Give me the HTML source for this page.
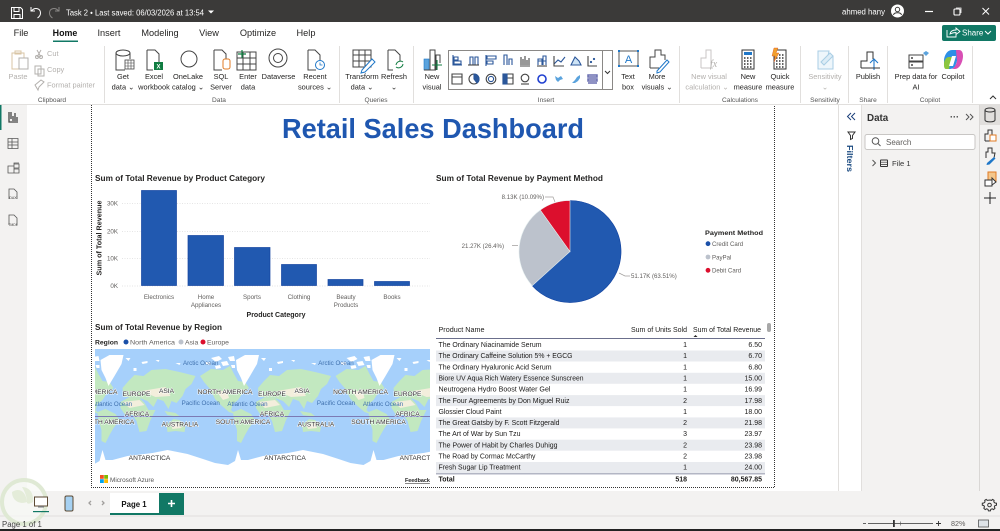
<!DOCTYPE html>
<html><head><meta charset="utf-8"><title>Retail Sales Dashboard</title>
<style>
html,body{margin:0;padding:0;background:#fff;overflow:hidden}
svg{display:block;position:absolute;left:0;top:0}
text{font-family:"Liberation Sans",sans-serif;font-size:7.5px;fill:#3b3a39}
.m{text-anchor:middle}.e{text-anchor:end}
.r{font-size:7.4px;fill:#252423}
.d{fill:#b3b0ad}
.g{font-size:6.6px;fill:#555}
.tab{font-size:9.2px;fill:#252423}
.h{font-size:8.6px;font-weight:bold;fill:#252423}
.ax{font-size:6.2px;fill:#605e5c}
.lb{font-size:6.1px;fill:#605e5c}
.t{font-size:7px;fill:#1b1a19}
.ml{font-size:6.6px;fill:#333;paint-order:stroke;stroke:#fff;stroke-width:1px;text-anchor:middle}
.oc{font-size:6.2px;fill:#3f70ad;text-anchor:middle}
.i{fill:none;stroke:#444;stroke-width:1}
.s{fill:none;stroke:#2b579a;stroke-width:1.1}
</style></head><body>
<svg width="1000" height="531" viewBox="0 0 1000 531" xmlns="http://www.w3.org/2000/svg">
<defs>
<clipPath id="mc"><rect x="95" y="349" width="335" height="125"/></clipPath>
<g id="tile">
<path fill="#c2e8c0" d="M-3,376L8,369L20,370L27,366L31,374L35,381L42,382L46,388L39,394L35,400L30,404L28,410L32,414L26,412L19,406L12,399L7,389L1,382Z"/>
<path fill="#c2e8c0" d="M30,412L38,409L48,414L52,420L46,428L42,435L38,443L34,441L34,430L31,420Z"/>
<path fill="#fff" d="M33,360L42,355L56,355L54,364L47,376L41,386L38,378L34,370Z"/>
<path fill="#fff" d="M8,358l8,-2l3,3l-6,3zM18,362l6,-1l2,4l-6,1zM25,357l6,-1l1,5l-5,0zM58,358l5,0l-2,3zM2,362l5,0l1,3l-5,0zM12,366l5,-1l1,3l-5,1zM28,365l4,0l0,3l-3,0zM74,362l6,-1l0,2l-5,1zM88,360l4,0l-1,2zM108,363l5,0l-1,2zM66,368l3,0l0,3l-3,0z"/>
<path fill="#c2e8c0" d="M53,402L62,397L72,398L77,403L81,410L88,410L83,420L79,431L72,432L69,421L65,415L57,414L53,408Z"/>
<path fill="#c2e8c0" d="M56,397L55,388L61,381L67,375L76,376L84,370L98,369L112,372L128,376L124,384L118,389L115,396L109,403L104,401L101,409L96,401L90,399L86,407L80,401L72,398L62,397Z"/>
<path fill="#c2e8c0" d="M99,425L106,419L112,420L118,426L117,432L108,431L100,432Z"/>
<path fill="#c2e8c0" d="M97,411L108,413L113,417L100,415Z"/>
<path fill="#f3eedc" d="M55,402L72,400L77,405L62,408ZM74,391L98,387L103,396L88,397ZM103,424L113,423L114,428L105,429ZM14,392L24,390L26,398L20,400Z"/>
<path fill="#fff" d="M0,474L0,459L12,463L25,465L32,461L35,450L38,460L45,460L60,456L85,453L100,450L120,454L135.5,459L135.5,474Z"/>
</g>
</defs>

<!-- backgrounds -->
<rect width="1000" height="531" fill="#fff"/>
<rect x="0" y="105" width="27" height="411" fill="#f3f2f1"/>
<rect x="0" y="104" width="1000" height="1" fill="#e1dfdd"/>
<rect x="862" y="105" width="118" height="386" fill="#f3f2f1"/>
<rect x="838" y="105" width="1" height="386" fill="#e1dfdd"/>
<rect x="861" y="105" width="1" height="386" fill="#e1dfdd"/>
<rect x="980" y="105" width="20" height="411" fill="#f3f2f1"/>
<rect x="979" y="105" width="1" height="386" fill="#d9d7d5"/>
<rect x="27" y="491" width="973" height="25" fill="#f3f2f1"/>
<rect x="0" y="516" width="1000" height="13" fill="#f3f2f1"/>
<rect x="0" y="515.5" width="1000" height="1" fill="#e1dfdd"/>
<rect x="0" y="529" width="1000" height="2" fill="#222"/>

<!-- title bar -->
<rect width="1000" height="22" fill="#3b3a39"/>
<g fill="none" stroke="#fff" stroke-width="1">
<path d="M11.5,7.5h9l2,2v9h-11zM14,7.5v4h5v-4M14,18.5v-4h6v4"/>
<path d="M31,7v4h4M31.5,11c3,-4 9,-3 9,2c0,2.500 -1.500,4 -3,5"/>
<path stroke="#8a8886" d="M59,7v4h-4M58.500,11c-3,-4 -9,-3 -9,2c0,2.500 1.500,4 3,5"/>
</g>
<text x="66" y="15.500" style="font-size:7.800px;fill:#fff" textLength="138" lengthAdjust="spacingAndGlyphs">Task 2 • Last saved: 06/03/2026 at 13:54</text>
<path d="M208,10.500h6l-3,3z" fill="#fff"/>
<text x="842" y="14.500" style="font-size:7.800px;fill:#fff" textLength="43" lengthAdjust="spacingAndGlyphs">ahmed hany</text>
<circle cx="897.500" cy="11" r="6.500" fill="#fff"/>
<circle cx="897.500" cy="9.500" r="2.200" fill="none" stroke="#3b3a39"/>
<path d="M893.500,15c.5,-3 7.500,-3 8,0" fill="none" stroke="#3b3a39"/>
<path d="M925,11.500h8" stroke="#fff" stroke-width="1.200"/>
<rect x="954" y="9" width="6" height="6" rx="1" fill="none" stroke="#fff" stroke-width="1.100"/>
<path d="M956,8h5v5" fill="none" stroke="#fff" stroke-width=".8"/>
<path d="M982.500,8l6.500,6.500M989,8l-6.500,6.500" stroke="#fff" stroke-width="1"/>

<!-- tabs -->
<text class="tab m" x="21" y="36">File</text>
<text class="tab m" x="65" y="36" style="font-weight:bold;font-size:8.900px;fill:#111">Home</text>
<text class="tab m" x="109" y="36">Insert</text>
<text class="tab m" x="160" y="36">Modeling</text>
<text class="tab m" x="209" y="36">View</text>
<text class="tab m" x="258" y="36">Optimize</text>
<text class="tab m" x="306" y="36">Help</text>
<rect x="53" y="40.500" width="25" height="1.500" fill="#117865"/>
<rect x="942" y="25" width="54" height="16" rx="2" fill="#117865"/>
<path d="M947,30v7h9v-3M950,34c.5,-3 3,-4 6,-4v-2l4,3.500l-4,3v-2c-3,0 -4,.5 -6,1.500z" fill="none" stroke="#fff" stroke-width=".9"/>
<text x="962" y="35.500" style="font-size:8px;fill:#fff">Share</text>
<path d="M985,31l3,3l3,-3" fill="none" stroke="#fff"/>

<!-- ribbon separators -->
<g fill="#e1dfdd">
<rect x="104" y="46" width="1" height="57"/><rect x="339" y="46" width="1" height="57"/><rect x="413" y="46" width="1" height="57"/>
<rect x="679" y="46" width="1" height="57"/><rect x="800" y="46" width="1" height="57"/><rect x="848" y="46" width="1" height="57"/>
<rect x="887" y="46" width="1" height="57"/><rect x="972" y="46" width="1" height="57"/>
</g>

<!-- ribbon labels -->
<text class="r d m" x="18" y="79">Paste</text>
<text class="r d" x="47" y="56">Cut</text>
<text class="r d" x="47" y="72">Copy</text>
<text class="r d" x="47" y="87.500">Format painter</text>
<text class="r m" x="123" y="79">Get</text><text class="r m" x="123" y="89.500">data ⌄</text>
<text class="r m" x="154" y="79">Excel</text><text class="r m" x="154" y="89.500">workbook</text>
<text class="r m" x="188" y="79">OneLake</text><text class="r m" x="188" y="89.500">catalog ⌄</text>
<text class="r m" x="221" y="79">SQL</text><text class="r m" x="221" y="89.500">Server</text>
<text class="r m" x="248" y="79">Enter</text><text class="r m" x="248" y="89.500">data</text>
<text class="r m" x="278.500" y="79">Dataverse</text>
<text class="r m" x="315" y="79">Recent</text><text class="r m" x="315" y="89.500">sources ⌄</text>
<text class="r m" x="362" y="79">Transform</text><text class="r m" x="362" y="89.500">data ⌄</text>
<text class="r m" x="394" y="79">Refresh</text><text class="r m" x="394" y="89.500">⌄</text>
<text class="r m" x="432" y="79">New</text><text class="r m" x="432" y="89.500">visual</text>
<text class="r m" x="628" y="79">Text</text><text class="r m" x="628" y="89.500">box</text>
<text class="r m" x="657" y="79">More</text><text class="r m" x="657" y="89.500">visuals ⌄</text>
<text class="r d m" x="709" y="79">New visual</text><text class="r d m" x="707" y="89.500">calculation ⌄</text>
<text class="r m" x="748" y="79">New</text><text class="r m" x="748" y="89.500">measure</text>
<text class="r m" x="780" y="79">Quick</text><text class="r m" x="780" y="89.500">measure</text>
<text class="r d m" x="825" y="79">Sensitivity</text><text class="r d m" x="825" y="89.500">⌄</text>
<text class="r m" x="868" y="79">Publish</text>
<text class="r m" x="916" y="79">Prep data for</text><text class="r m" x="916" y="89.500">AI</text>
<text class="r m" x="953" y="79">Copilot</text>
<text class="g m" x="52" y="102">Clipboard</text><text class="g m" x="219" y="102">Data</text><text class="g m" x="376" y="102">Queries</text>
<text class="g m" x="546" y="102">Insert</text><text class="g m" x="740" y="102">Calculations</text><text class="g m" x="825" y="102">Sensitivity</text>
<text class="g m" x="868" y="102">Share</text><text class="g m" x="930" y="102">Copilot</text>
<path d="M990,99l3,-3l3,3" fill="none" stroke="#333"/>

<!-- ribbon icons: clipboard -->
<g fill="none" stroke="#d9c5a5"><path d="M12,53h12v16h-12z"/><path d="M15,51h6v3h-6z"/></g>
<rect x="19" y="58" width="9" height="11" fill="#fff" stroke="#b3b0ad"/>
<g fill="none" stroke="#b3b0ad"><path d="M37,50l4,7M41,50l-4,7"/><circle cx="37" cy="57" r="1.500"/><circle cx="41" cy="57" r="1.500"/>
<path d="M35,66h6v8h-6zM38,69h6v7h-6zM35,85l6,-5l3,2l-5,5l-1,3z"/></g>
<!-- data -->
<g class="i">
<path d="M116,53v17h9M130,53v6"/><ellipse cx="123" cy="53" rx="7" ry="3"/>
<path d="M147,50h8l4,4v9M147,50v20h6"/>
<path d="M214,50h8l4,4v6M214,50v20h8"/>
<path d="M308,50h7l5,5v8M308,50v20h8"/>
<path d="M237,52h19v18h-19zM237,58h19M237,64h19M243,52v18M250,52v18"/>
<circle cx="189" cy="59" r="8"/><circle cx="278" cy="58" r="9"/><circle cx="278" cy="58" r="4.500"/>
</g>
<path d="M181,59a8,8 0 0 1 8,-8a8,8 0 0 0 0,16a8,8 0 0 1 -8,-8z" fill="#333"/>
<rect x="125" y="60" width="9" height="9" fill="#fff" stroke="#444" stroke-width=".8"/><path d="M125,63h9M125,66h9M128,60v9M131,60v9" stroke="#444" stroke-width=".6"/>
<rect x="154" y="62" width="9" height="8" fill="#107c41"/><text x="156.500" y="68.500" style="font-size:6px;fill:#fff;font-weight:bold">X</text>
<rect x="223" y="59" width="7" height="10" rx="2" fill="#fff" stroke="#e07b24"/>
<path d="M242,50v8M238,54h8" stroke="#107c41" stroke-width="1.200"/>
<circle cx="320" cy="65" r="4.500" fill="#fff" stroke="#1f77c8"/><path d="M320,62.500v2.500h2.500" stroke="#1f77c8" fill="none" stroke-width=".8"/>
<!-- queries -->
<g class="i"><path d="M353,50h18v17h-18zM353,55h18M353,61h18M359,50v17M365,50v17"/><path d="M388,50h7l5,5v6M388,50v20h5"/></g>
<path d="M362,70l10,-11l3,3l-10,10l-4,1z" fill="#fff" stroke="#1f77c8"/>
<path d="M396,65a4.500,4.500 0 0 1 7,-3M403,64a4.500,4.500 0 0 1 -7,3" fill="none" stroke="#107c41"/>
<!-- new visual -->
<rect x="424" y="59" width="5" height="11" fill="#5ba3dd" stroke="#1f77c8" stroke-width=".6"/>
<path d="M430,70v-20h5v20M436,70v-15h4v8M424,70h12" fill="none" stroke="#444"/>
<path d="M437,60v10M432,65h10" stroke="#107c41" stroke-width="1.100"/>
<!-- gallery -->
<rect x="448.500" y="50.500" width="154" height="39" fill="none" stroke="#8a8886"/>
<rect x="602.500" y="50.500" width="10" height="39" fill="none" stroke="#8a8886"/>
<path d="M605,71l2.500,2.500l2.500,-2.500" fill="none" stroke="#333"/>
<g class="s">
<path d="M453,55v10h9M454,57h4v3h-4zM454,61h7v3h-7z"/>
<path d="M470,65v-8h3v8M475,65v-8h3v8"/><path d="M468,65h11" stroke="#444"/>
<path d="M487,56h9v3h-9zM487,61h6v3h-6zM486,55v11"/>
<path d="M504,65v-10h3v10M509,65v-6h3v6"/>
<path d="M521,65v-8M523,65v-6M525,65v-9M527,65v-5M529,65v-7M520,66h10" stroke="#444"/>
<path d="M538,65v-6h4v6M543,65v-9h3v9M538,61h8"/><path d="M537,66h10" stroke="#444"/>
<path d="M554,64l4,-4l3,2l4,-5" /><path d="M554,56v10h10" stroke="#444"/>
<path d="M571,65l4,-8l4,4l2,4z" fill="#cde3f5"/>
<path d="M588,56v10h9" stroke="#444"/><circle cx="591" cy="62" r=".6"/><circle cx="594" cy="59" r=".6"/>
<path d="M452,74h10v10h-10zM452,77h10" stroke="#444"/><circle cx="474" cy="79" r="5" stroke="#444"/><path d="M474,74a5,5 0 0 1 3,9l-3,-4z" fill="#2b579a"/>
<circle cx="491" cy="79" r="4.800" stroke="#444"/><circle cx="491" cy="79" r="2.600"/>
<path d="M503,74h10v10h-10zM507,74v10M507,78h6" stroke="#444"/><rect x="503" y="74" width="4" height="10" fill="#2b579a"/>
<circle cx="525" cy="78" r="3.800" stroke="#444"/><path d="M521,84h8" stroke="#444"/>
<circle cx="542" cy="79" r="4" stroke="#1f3fd0" stroke-width="1.600"/>
<path d="M555,76l3,2l3,-2l2,3l-3,1l-2,2l-2,-2z" fill="#5ba3dd" stroke="none"/>
<path d="M572,83l3,-3l2,-3l3,-2l0,3l-2,3l-3,2z" fill="#5ba3dd" stroke="none"/>
<path d="M588,75h9v2h-9zM588,79h9v2h-9zM588,83h9" stroke="#6a6fb0" stroke-width="1.500"/>
</g>
<!-- text box, more visuals -->
<rect x="619" y="51" width="19" height="15" fill="none" stroke="#555"/>
<g fill="#1f77c8"><rect x="618" y="50" width="2" height="2"/><rect x="637" y="50" width="2" height="2"/><rect x="618" y="65" width="2" height="2"/><rect x="637" y="65" width="2" height="2"/></g>
<text class="m" x="628.500" y="63" style="font-size:11px;fill:#1f77c8">A</text>
<path d="M650,68v-11h5v-7h6v5h4v5M650,68h9" fill="none" stroke="#444"/>
<path d="M657,71l10,-11l2,2l-9,10l-3,1z" fill="#fff" stroke="#1f77c8"/>
<!-- calculations -->
<g fill="none" stroke="#c8c6c4"><path d="M701,68v-10h5v-8h5v18M701,68h12"/></g>
<text x="710" y="67" style="font-size:10px;font-style:italic;fill:#b3b0ad;font-family:'Liberation Serif',serif">fx</text>
<rect x="742" y="50" width="12" height="19" fill="#fff" stroke="#333"/><rect x="744" y="52" width="8" height="3" fill="#1f77c8"/>
<path d="M744,58h8M744,61h8M744,64h8M744,67h8" stroke="#333" stroke-dasharray="1.500 1.500" stroke-width="1.500"/>
<rect x="774" y="50" width="12" height="19" fill="#fff" stroke="#333"/>
<path d="M776,55h8M776,58h8M776,61h8M776,64h8M776,67h8" stroke="#333" stroke-dasharray="1.500 1.500" stroke-width="1.500"/>
<path d="M774,48h4l-2,5h3l-5,9l1,-6h-3z" fill="#f2a12e" stroke="#d9541e" stroke-width=".4"/>
<!-- sensitivity -->
<path d="M818,51h11l-1,5l5,0v13h-15z" fill="#eef6fb" stroke="#a9cde4"/><path d="M821,62l9,-9l3,3l-9,9z" fill="#dcecf6" stroke="#a9cde4"/>
<!-- publish -->
<path d="M861,68v-7h6v-9h6v7M861,68h8" fill="none" stroke="#333"/>
<path d="M874,70v-11M870,63l4,-4l4,4" fill="none" stroke="#1f77c8" stroke-width="1.100"/><path d="M868,68h12" stroke="#333"/>
<!-- prep data -->
<rect x="909" y="55" width="14" height="6" fill="none" stroke="#444"/><rect x="909" y="62" width="14" height="6" fill="none" stroke="#444"/>
<path d="M923,53l3,-2l3,2l-3,3z" fill="#5ba3dd"/><circle cx="912" cy="58" r="1" fill="#444"/><circle cx="912" cy="65" r="1" fill="#444"/>
<!-- copilot -->
<path d="M944,61c0,-5 3,-11 8,-11h5c3,0 3,3 2,5l-3,9c-1,4 -4,5 -7,5h-2c-3,0 -3,-4 -3,-8z" fill="#2d8fe6"/>
<path d="M944,64c0,-5 3,-7 5,-7l3,0l-3,12h-3c-2,0 -2,-3 -2,-5z" fill="#8cc63f"/>
<path d="M956,50h3c3,0 4,3 4,6c0,5 -3,13 -8,13h-4c3,0 5,-4 6,-8z" fill="#d84fb4"/>
<path d="M949,66l3,-10h4l-3,10z" fill="#fff"/>

<!-- left nav -->
<rect x="0" y="105" width="1.500" height="25" fill="#117865"/>
<path d="M9,112v10h9M11,119v-7M13,121v-5M15,121v-8M17,121v-4" fill="none" stroke="#444" stroke-width="1.300"/>
<path d="M8,138.500h10v10h-10zM8,142h10M8,145h10M12,138.500v10" fill="none" stroke="#555" stroke-width=".8"/>
<path d="M8,166h6v7h-6zM14,164h5v4h-5zM14,169h5v4h-5zM14,164v-1h5" fill="none" stroke="#555" stroke-width=".8"/>
<path d="M9,199v-10h5l3,3v7" fill="none" stroke="#555" stroke-width=".8"/><text class="m" x="13" y="199" style="font-size:3.500px">DAX</text>
<path d="M9,225v-10h5l3,3v7" fill="none" stroke="#555" stroke-width=".8"/><text class="m" x="13" y="226" style="font-size:3.500px">TMDL</text>

<!-- report canvas dashed border -->
<path d="M91.500,105v382.500h683v-382.500" fill="none" stroke="#333" stroke-dasharray="1 1" stroke-width="1"/>
<text class="m" x="433" y="138" style="font-size:28px;font-weight:bold;fill:#1f57b0" textLength="302" lengthAdjust="spacingAndGlyphs">Retail Sales Dashboard</text>

<!-- bar chart -->
<text class="h" x="95" y="181" textLength="170" lengthAdjust="spacingAndGlyphs">Sum of Total Revenue by Product Category</text>
<g stroke="#ddd" stroke-dasharray="1 1.500" stroke-width=".8"><path d="M122,203.500h308M122,231.500h308M122,258.500h308M122,286h308"/></g>
<g fill="#2159b0" stroke="#1343a0" stroke-width=".7">
<rect x="141.500" y="190.500" width="35" height="95"/><rect x="188" y="235.500" width="35.500" height="50"/>
<rect x="234.500" y="247.500" width="35.500" height="38"/><rect x="281.500" y="264.500" width="35" height="21"/>
<rect x="328" y="279.500" width="35" height="6"/><rect x="374.500" y="281.500" width="35" height="4"/>
</g>
<text class="ax e" x="118" y="205.500">30K</text><text class="ax e" x="118" y="233.500">20K</text><text class="ax e" x="118" y="260.500">10K</text><text class="ax e" x="118" y="288">0K</text>
<text class="h" transform="translate(101.500,275.500) rotate(-90)" style="font-size:7px" textLength="75" lengthAdjust="spacingAndGlyphs">Sum of Total Revenue</text>
<text class="ax m" x="159" y="299">Electronics</text>
<text class="ax m" x="206" y="299">Home</text><text class="ax m" x="206" y="307">Appliances</text>
<text class="ax m" x="252" y="299">Sports</text><text class="ax m" x="299" y="299">Clothing</text>
<text class="ax m" x="346" y="299">Beauty</text><text class="ax m" x="346" y="307">Products</text>
<text class="ax m" x="392" y="299">Books</text>
<text class="h m" x="276" y="317" style="font-size:7px" textLength="59" lengthAdjust="spacingAndGlyphs">Product Category</text>

<!-- pie -->
<text class="h" x="436" y="181" textLength="167" lengthAdjust="spacingAndGlyphs">Sum of Total Revenue by Payment Method</text>
<g stroke="#1343a0" stroke-width=".6">
<path d="M570,251.500L570,200.500A51,51 0 1 1 532.200,285.700Z" fill="#2159b0"/></g>
<path d="M570,251.500L532.200,285.700A51,51 0 0 1 540.300,210Z" fill="#bcc2cc" stroke="#e6f0f0" stroke-width=".6"/>
<path d="M570,251.500L540.300,210A51,51 0 0 1 570,200.500Z" fill="#dc0f2d" stroke="#e6f0f0" stroke-width=".6"/>
<path d="M545,197h8l2,5M518,245.500h-6M619,273l6,3h5" fill="none" stroke="#a19f9d" stroke-width=".7"/>
<text class="lb e" x="544" y="199">8.13K (10.09%)</text>
<text class="lb e" x="504" y="248">21.27K (26.4%)</text>
<text class="lb" x="631" y="278">51.17K (63.51%)</text>
<text class="h" x="705" y="235" style="font-size:6.800px" textLength="58" lengthAdjust="spacingAndGlyphs">Payment Method</text>
<circle cx="708" cy="243.700" r="2.400" fill="#1a4fa8"/><text class="lb" x="712" y="246">Credit Card</text>
<circle cx="708" cy="257" r="2.400" fill="#bcc2cc"/><text class="lb" x="712" y="259.500">PayPal</text>
<circle cx="708" cy="270.300" r="2.400" fill="#dc0f2d"/><text class="lb" x="712" y="272.700">Debit Card</text>

<!-- map -->
<text class="h" x="95" y="330" textLength="127" lengthAdjust="spacingAndGlyphs">Sum of Total Revenue by Region</text>
<text class="h" x="95" y="344.500" style="font-size:6.800px" textLength="23" lengthAdjust="spacingAndGlyphs">Region</text>
<circle cx="126" cy="342" r="2.500" fill="#1a4fa8"/><text class="lb" x="130" y="344.500" style="font-size:6.800px" textLength="45" lengthAdjust="spacingAndGlyphs">North America</text>
<circle cx="181" cy="342" r="2.500" fill="#bcc2cc"/><text class="lb" x="185" y="344.500" style="font-size:6.800px">Asia</text>
<circle cx="203" cy="342" r="2.500" fill="#dc0f2d"/><text class="lb" x="207" y="344.500" style="font-size:6.800px">Europe</text>
<g clip-path="url(#mc)">
<rect x="95" y="349" width="335" height="125" fill="#a6d0fb"/>
<use href="#tile" x="-68"/><use href="#tile" x="67.500"/><use href="#tile" x="203"/><use href="#tile" x="338.500"/>
<rect x="95" y="416" width="335" height="1" fill="#7c7ab4"/>
<text class="oc" x="200.700" y="365">Arctic Ocean</text><text class="oc" x="336" y="365">Arctic Ocean</text>
<text class="oc" x="200.700" y="405">Pacific Ocean</text><text class="oc" x="336" y="405">Pacific Ocean</text>
<text class="oc" x="112" y="406">Atlantic Ocean</text><text class="oc" x="247.500" y="406">Atlantic Ocean</text><text class="oc" x="383" y="406">Atlantic Ocean</text>
<text class="ml" x="90" y="394">NORTH AMERICA</text><text class="ml" x="225" y="394">NORTH AMERICA</text><text class="ml" x="360.500" y="394">NORTH AMERICA</text>
<text class="ml" x="136.500" y="396">EUROPE</text><text class="ml" x="272" y="396">EUROPE</text><text class="ml" x="407.500" y="396">EUROPE</text>
<text class="ml" x="166.500" y="393">ASIA</text><text class="ml" x="302" y="393">ASIA</text>
<text class="ml" x="137" y="416">AFRICA</text><text class="ml" x="272" y="416">AFRICA</text><text class="ml" x="407.500" y="416">AFRICA</text>
<text class="ml" x="107" y="424">SOUTH AMERICA</text><text class="ml" x="243" y="424">SOUTH AMERICA</text><text class="ml" x="378.500" y="424">SOUTH AMERICA</text>
<text class="ml" x="180" y="426.500">AUSTRALIA</text><text class="ml" x="316" y="426.500">AUSTRALIA</text>
<text class="ml" x="149.500" y="460">ANTARCTICA</text><text class="ml" x="285" y="460">ANTARCTICA</text><text class="ml" x="420.500" y="460">ANTARCTICA</text>
</g>
<g><rect x="100" y="475" width="3.800" height="3.800" fill="#f25022"/><rect x="104.200" y="475" width="3.800" height="3.800" fill="#7fba00"/><rect x="100" y="479.200" width="3.800" height="3.800" fill="#00a4ef"/><rect x="104.200" y="479.200" width="3.800" height="3.800" fill="#ffb900"/></g>
<text x="110" y="482" style="font-size:6.400px;fill:#555">Microsoft Azure</text>
<text x="405" y="482" style="font-size:5.400px;fill:#222;text-decoration:underline;font-weight:bold">Feedback</text>

<!-- table -->
<g fill="#e9ebef">
<rect x="436" y="350.500" width="329" height="11"/><rect x="436" y="372.800" width="329" height="11"/><rect x="436" y="395.100" width="329" height="11"/>
<rect x="436" y="417.400" width="329" height="11"/><rect x="436" y="439.700" width="329" height="11"/><rect x="436" y="462" width="329" height="11"/>
</g>
<text class="t" x="438.500" y="332" textLength="46" lengthAdjust="spacingAndGlyphs">Product Name</text>
<text class="t" x="631" y="332" textLength="56" lengthAdjust="spacingAndGlyphs">Sum of Units Sold</text>
<text class="t" x="693" y="332" textLength="68" lengthAdjust="spacingAndGlyphs">Sum of Total Revenue</text>
<path d="M693.500,337l2,-2l2,2z" fill="#222"/>
<rect x="436" y="338" width="329" height="1" fill="#6b6f8c"/>
<rect x="767" y="323" width="4" height="9" rx="2" fill="#a8a8a8"/>
<g>
<text class="t" x="438.500" y="347" textLength="103" lengthAdjust="spacingAndGlyphs">The Ordinary Niacinamide Serum</text>
<text class="t" x="438.500" y="358.200" textLength="134" lengthAdjust="spacingAndGlyphs">The Ordinary Caffeine Solution 5% + EGCG</text>
<text class="t" x="438.500" y="369.300" textLength="113" lengthAdjust="spacingAndGlyphs">The Ordinary Hyaluronic Acid Serum</text>
<text class="t" x="438.500" y="380.500" textLength="145" lengthAdjust="spacingAndGlyphs">Biore UV Aqua Rich Watery Essence Sunscreen</text>
<text class="t" x="438.500" y="391.600" textLength="112" lengthAdjust="spacingAndGlyphs">Neutrogena Hydro Boost Water Gel</text>
<text class="t" x="438.500" y="402.800" textLength="131" lengthAdjust="spacingAndGlyphs">The Four Agreements by Don Miguel Ruiz</text>
<text class="t" x="438.500" y="413.900" textLength="63" lengthAdjust="spacingAndGlyphs">Glossier Cloud Paint</text>
<text class="t" x="438.500" y="425.100" textLength="121" lengthAdjust="spacingAndGlyphs">The Great Gatsby by F. Scott Fitzgerald</text>
<text class="t" x="438.500" y="436.200" textLength="82" lengthAdjust="spacingAndGlyphs">The Art of War by Sun Tzu</text>
<text class="t" x="438.500" y="447.400" textLength="119" lengthAdjust="spacingAndGlyphs">The Power of Habit by Charles Duhigg</text>
<text class="t" x="438.500" y="458.500" textLength="97" lengthAdjust="spacingAndGlyphs">The Road by Cormac McCarthy</text>
<text class="t" x="438.500" y="469.700" textLength="82" lengthAdjust="spacingAndGlyphs">Fresh Sugar Lip Treatment</text>
</g>
<g>
<text class="t e" x="687" y="347">1</text><text class="t e" x="762" y="347">6.50</text>
<text class="t e" x="687" y="358.200">1</text><text class="t e" x="762" y="358.200">6.70</text>
<text class="t e" x="687" y="369.300">1</text><text class="t e" x="762" y="369.300">6.80</text>
<text class="t e" x="687" y="380.500">1</text><text class="t e" x="762" y="380.500">15.00</text>
<text class="t e" x="687" y="391.600">1</text><text class="t e" x="762" y="391.600">16.99</text>
<text class="t e" x="687" y="402.800">2</text><text class="t e" x="762" y="402.800">17.98</text>
<text class="t e" x="687" y="413.900">1</text><text class="t e" x="762" y="413.900">18.00</text>
<text class="t e" x="687" y="425.100">2</text><text class="t e" x="762" y="425.100">21.98</text>
<text class="t e" x="687" y="436.200">3</text><text class="t e" x="762" y="436.200">23.97</text>
<text class="t e" x="687" y="447.400">2</text><text class="t e" x="762" y="447.400">23.98</text>
<text class="t e" x="687" y="458.500">2</text><text class="t e" x="762" y="458.500">23.98</text>
<text class="t e" x="687" y="469.700">1</text><text class="t e" x="762" y="469.700">24.00</text>
</g>
<rect x="436" y="473" width="329" height="1.500" fill="#b3b6c4"/>
<text class="t" x="438.500" y="481.500" style="font-weight:bold">Total</text>
<text class="t e" x="687" y="481.500" style="font-weight:bold">518</text>
<text class="t e" x="762" y="481.500" style="font-weight:bold">80,567.85</text>

<!-- filters pane -->
<path d="M851,113l-3.500,3.500l3.500,3.500M855,113l-3.500,3.500l3.500,3.500" fill="none" stroke="#1a3f7a" stroke-width="1"/>
<path d="M848,132h7l-2.500,3.500v3l-2,1v-4z" fill="none" stroke="#333"/>
<text transform="translate(847,145) rotate(90)" style="font-size:8.500px;font-weight:bold;fill:#1a4a80" textLength="27" lengthAdjust="spacingAndGlyphs">Filters</text>

<!-- data pane -->
<text x="867" y="121" style="font-size:9.800px;font-weight:bold;fill:#333">Data</text>
<text x="950" y="120" style="font-size:9px;fill:#333;font-weight:bold">···</text>
<path d="M966,114l3,3l-3,3M970,114l3,3l-3,3" fill="none" stroke="#555"/>
<rect x="865" y="134.500" width="110" height="15" rx="2" fill="#fff" stroke="#c8c6c4"/>
<circle cx="875.500" cy="141" r="3.300" fill="none" stroke="#555"/><path d="M878,143.500l2.500,2.500" stroke="#555"/>
<text x="886" y="145" style="font-size:8px;fill:#605e5c">Search</text>
<path d="M872.500,160l3,3l-3,3" fill="none" stroke="#555"/>
<rect x="880.500" y="160" width="7" height="6.500" rx=".5" fill="none" stroke="#333"/><path d="M880.500,162.200h7M880.500,164.400h7" stroke="#333" stroke-width=".7"/>
<text x="892" y="166" style="font-size:7.600px;fill:#333">File 1</text>

<!-- right rail -->
<rect x="980" y="104" width="20" height="21" fill="#e1dfdd"/>
<path d="M985,110v10c0,2.500 10,2.500 10,0v-10" fill="none" stroke="#333"/><ellipse cx="990" cy="110" rx="5" ry="2" fill="none" stroke="#333"/>
<path d="M985,141v-7h3v-4h4v6" fill="none" stroke="#333"/><path d="M985,141h5" stroke="#333"/><rect x="990" y="135" width="6" height="6" fill="#fff" stroke="#e07b24"/>
<path d="M986,158v-6h2v-4h4v5h3l-1,5" fill="none" stroke="#333"/><path d="M987,163l7,-6l1.500,1.500l-6,6l-3,.5z" fill="#1f77c8"/>
<rect x="988" y="172" width="8" height="9" fill="#f4c68a" stroke="#e07b24"/><path d="M985,180h7v6h-7z" fill="#fff" stroke="#333"/><path d="M992,178l4,4l-4,3z" fill="#fff" stroke="#333"/>
<path d="M990,192v12M984,198h12" stroke="#222" stroke-width="1"/>
<path d="M990,500l1.600,.4l1,-1l1.500,1l-.3,1.500l1.200,1.100l1.500,.2v2l-1.500,.3l-.7,1.400l.7,1.300l-1.400,1.400l-1.400,-.8l-1.400,.6l-.4,1.500h-2l-.4,-1.500l-1.400,-.6l-1.400,.8l-1.400,-1.400l.7,-1.300l-.7,-1.400l-1.500,-.3v-2l1.500,-.2l1.200,-1.100l-.3,-1.500l1.500,-1l1,1z" fill="none" stroke="#333"/>
<circle cx="989.500" cy="505" r="1.800" fill="none" stroke="#333"/>

<!-- page tabs -->
<circle cx="24" cy="502" r="22" fill="#f7f8f4" fill-opacity=".75" stroke="#dfe9d4" stroke-width="4"/>
<path d="M12,492c8,-5 14,0 15,10c-8,3 -15,-2 -15,-10zM22,487c8,0 12,7 11,15c-3,2 -5,2 -6,1c0,-6 -2,-11 -5,-16z" fill="#e4ecd9"/>
<rect x="34.500" y="497" width="13" height="9" fill="#fff" stroke="#5c4a33"/><rect x="38" y="506" width="6" height="1.500" fill="#777"/>
<rect x="33" y="511" width="16" height="1.200" fill="#117865"/>
<rect x="65" y="496" width="8" height="15" rx="1.500" fill="#a6d1f2" stroke="#5c4a33"/>
<path d="M91,501l-2,2l2,2M102,501l2,2l-2,2" fill="none" stroke="#a19f9d" stroke-width="1.300"/>
<rect x="110" y="493" width="49" height="22" fill="#fff"/>
<rect x="110" y="513" width="49" height="2" fill="#117865"/>
<text class="m" x="134" y="507" style="font-size:7.800px;font-weight:bold;fill:#111">Page 1</text>
<rect x="159" y="493" width="25" height="22" fill="#117865"/>
<path d="M171.500,500v7M168,503.500h7" stroke="#fff" stroke-width="1.600"/>

<!-- status bar -->
<text x="2" y="527" style="font-size:7.800px;fill:#444">Page 1 of 1</text>
<path d="M863,523.500h3M868,523.500h65" stroke="#333" stroke-width=".8"/>
<rect x="893" y="520" width="1.800" height="7" fill="#333"/>
<path d="M900.500,521.500v4" stroke="#555" stroke-width=".6"/>
<path d="M936,523.500h5M938.500,521v5" stroke="#333" stroke-width=".9"/>
<text x="951" y="526" style="font-size:7.200px;fill:#605e5c">82%</text>
<rect x="978.500" y="520" width="10" height="7" fill="#dfe4e8" stroke="#555" stroke-width=".8"/>
</svg>
</body></html>
